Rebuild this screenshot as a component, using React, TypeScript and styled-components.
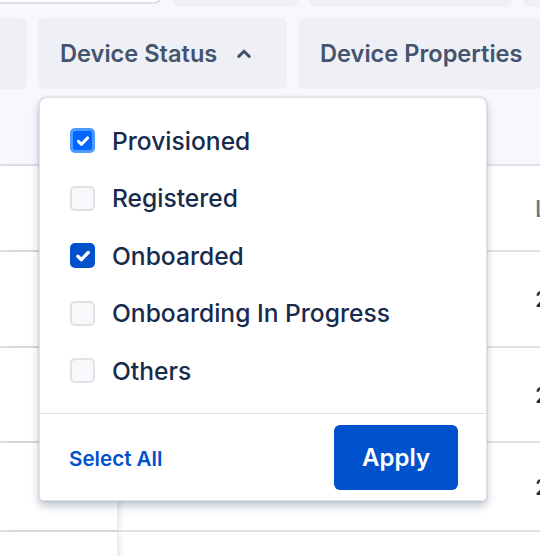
import React from "react";
import styled, { createGlobalStyle } from "styled-components";

const Global = createGlobalStyle`
  html, body { margin: 0; padding: 0; background: #f7f8fc; }
  body {
    font-family: Inter, "Noto Sans", "Liberation Sans", sans-serif;
    -webkit-font-smoothing: antialiased;
  }
  #root { width: 540px; height: 556px; overflow: hidden; }
`;

const Page = styled.div`
  position: relative;
  width: 540px;
  height: 556px;
  overflow: hidden;
  background: #f7f8fc;
  display: flex;
  flex-direction: column;
`;

const TopStrip = styled.div`
  display: flex;
  align-items: flex-start;
  gap: 11px;
  margin-top: -30px;
  margin-left: -40px;
  height: 37px;
  flex-shrink: 0;
`;

const TopPill = styled.div<{ $w: number; $outlined?: boolean }>`
  width: ${(p) => p.$w}px;
  flex-shrink: 0;
  height: ${(p) => (p.$outlined ? 34 : 37)}px;
  box-sizing: border-box;
  border-radius: 8px;
  background: ${(p) => (p.$outlined ? "#ffffff" : "#eef0f5")};
  border: ${(p) => (p.$outlined ? "2px solid #dcdfe4" : "none")};
`;

const FilterRow = styled.div`
  display: flex;
  gap: 11px;
  margin-top: 11px;
  margin-left: -80px;
  height: 71px;
  flex-shrink: 0;
`;

const FilterButton = styled.div<{ $w: number }>`
  width: ${(p) => p.$w}px;
  flex-shrink: 0;
  box-sizing: border-box;
  height: 71px;
  border-radius: 6px;
  background: #eef0f5;
  display: flex;
  align-items: center;
  padding-left: 22px;
  gap: 20px;
  color: #44546f;
  font-size: 23.6px;
  font-weight: 600;
  white-space: nowrap;
`;

const Table = styled.div`
  margin-top: 75px;
  border-top: 2px solid #dfe1e6;
  background: #ffffff;
  flex: 1;
  display: flex;
  flex-direction: column;
`;

const Row = styled.div<{ $h: number }>`
  display: grid;
  grid-template-columns: 118px 401px 1fr;
  height: ${(p) => p.$h}px;
  flex-shrink: 0;
  border-bottom: 2px solid #dfe1e6;
`;

const StickyCell = styled.div`
  background: #ffffff;
  border-right: 1px solid #ebecf0;
  box-shadow: 4px 0 6px -2px rgba(9, 30, 66, 0.12);
  position: relative;
  z-index: 1;
`;

const Cell = styled.div``;

const TextCell = styled.div<{ $head?: boolean }>`
  display: flex;
  align-items: center;
  padding-left: 16px;
  padding-top: ${(p) => (p.$head ? 2 : 0)}px;
  white-space: nowrap;
  font-size: ${(p) => (p.$head ? 23 : 22)}px;
  font-weight: 500;
  color: ${(p) => (p.$head ? "#6b778c" : "#172b4d")};
`;

const Menu = styled.div`
  position: absolute;
  left: 39px;
  top: 97px;
  width: 448px;
  height: 404px;
  box-sizing: border-box;
  background: #ffffff;
  border: 1px solid #e1e3e8;
  border-radius: 8px 8px 4px 4px;
  box-shadow: 0 5px 9px rgba(9, 30, 66, 0.25), 0 0 2px rgba(9, 30, 66, 0.2);
  z-index: 5;
  display: flex;
  flex-direction: column;
`;

const OptionList = styled.div`
  padding: 14px 0 13px 30px;
  display: flex;
  flex-direction: column;
`;

const Option = styled.label`
  height: 57.5px;
  display: flex;
  align-items: center;
  gap: 17px;
  font-size: 24.6px;
  font-weight: 500;
  color: #172b4d;
  cursor: pointer;
`;

const Box = styled.span<{ $checked: boolean; $focused?: boolean }>`
  width: 25px;
  height: 25px;
  box-sizing: border-box;
  border-radius: 5px;
  display: flex;
  align-items: center;
  justify-content: center;
  flex-shrink: 0;
  background: ${(p) => (p.$checked ? (p.$focused ? "#0065ff" : "#0052cc") : "#f7f8f9")};
  border: ${(p) =>
    p.$focused ? "3px solid #4c9aff" : p.$checked ? "none" : "2px solid #dfe1e6"};
`;

const Footer = styled.div`
  border-top: 1px solid #dfe1e6;
  flex: 1;
  display: flex;
  align-items: center;
  justify-content: space-between;
  padding: 0 28px 0 29px;
`;

const LinkButton = styled.span`
  color: #0052cc;
  font-size: 20.6px;
  font-weight: 600;
  padding-top: 3px;
`;

const ApplyButton = styled.button`
  width: 124px;
  height: 65px;
  border: none;
  border-radius: 6px;
  background: #0052cc;
  color: #ffffff;
  font-family: inherit;
  font-size: 24px;
  font-weight: 600;
  margin-top: 1px;
`;

const Check = ({ focused }: { focused?: boolean }) => (
  <svg width={focused ? 16 : 18} height={focused ? 16 : 18} viewBox="0 0 16 16">
    <path
      d="M3.4 8.3 L6.6 11.3 L12.6 4.9"
      fill="none"
      stroke="#ffffff"
      strokeWidth={3}
      strokeLinecap="round"
      strokeLinejoin="round"
    />
  </svg>
);

const Chevron = () => (
  <svg width="14" height="9" viewBox="0 0 14 9">
    <path
      d="M1.8 7.4 L7 2.2 L12.2 7.4"
      fill="none"
      stroke="#44546f"
      strokeWidth={3}
      strokeLinecap="round"
      strokeLinejoin="round"
    />
  </svg>
);

const options = [
  { label: "Provisioned", checked: true, focused: true },
  { label: "Registered", checked: false },
  { label: "Onboarded", checked: true },
  { label: "Onboarding In Progress", checked: false },
  { label: "Others", checked: false },
];

const rows = [
  { h: 94, v: "2024-05-12" },
  { h: 93, v: "2024-05-11" },
  { h: 87, v: "2024-05-10" },
  { h: 87, v: "2024-05-09" },
];

export default function App() {
  return (
    <Page>
      <Global />
      <TopStrip>
        <TopPill $w={202} $outlined />
        <TopPill $w={125} />
        <TopPill $w={203} />
        <TopPill $w={60} />
      </TopStrip>
      <FilterRow>
        <FilterButton $w={107} />
        <FilterButton $w={249}>
          Device Status
          <Chevron />
        </FilterButton>
        <FilterButton $w={270}>Device Properties</FilterButton>
      </FilterRow>
      <Table>
        <Row $h={84}>
          <StickyCell />
          <Cell />
          <TextCell $head>Last Seen</TextCell>
        </Row>
        {rows.map((r, i) => (
          <Row key={i} $h={r.h}>
            <StickyCell />
            <Cell />
            <TextCell>{r.v}</TextCell>
          </Row>
        ))}
      </Table>
      <Menu>
        <OptionList>
          {options.map((o) => (
            <Option key={o.label}>
              <Box $checked={o.checked} $focused={o.focused}>
                {o.checked && <Check focused={o.focused} />}
              </Box>
              {o.label}
            </Option>
          ))}
        </OptionList>
        <Footer>
          <LinkButton>Select All</LinkButton>
          <ApplyButton>Apply</ApplyButton>
        </Footer>
      </Menu>
    </Page>
  );
}
